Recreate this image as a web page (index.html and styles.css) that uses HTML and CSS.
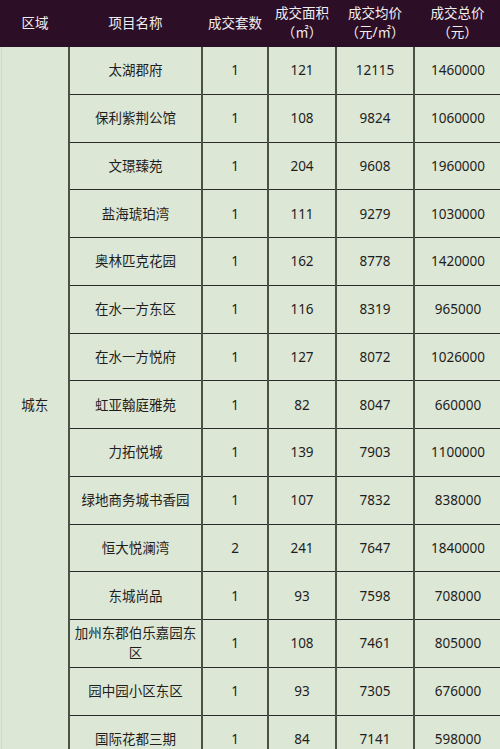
FILE: index.html
```html
<!DOCTYPE html>
<html lang="zh-CN">
<head>
<meta charset="utf-8">
<link rel="stylesheet" href="styles.css">
</head>
<body>
<table class="deals">
  <colgroup>
    <col class="c-area"><col class="c-name"><col class="c-cnt"><col class="c-size"><col class="c-avg"><col class="c-total">
  </colgroup>
  <thead>
    <tr>
      <th>区域</th>
      <th>项目名称</th>
      <th>成交套数</th>
      <th>成交面积<br>（㎡）</th>
      <th>成交均价<br>（元/㎡）</th>
      <th>成交总价<br>（元）</th>
    </tr>
  </thead>
  <tbody>
    <tr><td class="region" rowspan="15">城东</td><td>太湖郡府</td><td>1</td><td>121</td><td>12115</td><td>1460000</td></tr>
    <tr><td>保利紫荆公馆</td><td>1</td><td>108</td><td>9824</td><td>1060000</td></tr>
    <tr><td>文璟臻苑</td><td>1</td><td>204</td><td>9608</td><td>1960000</td></tr>
    <tr><td>盐海琥珀湾</td><td>1</td><td>111</td><td>9279</td><td>1030000</td></tr>
    <tr><td>奥林匹克花园</td><td>1</td><td>162</td><td>8778</td><td>1420000</td></tr>
    <tr><td>在水一方东区</td><td>1</td><td>116</td><td>8319</td><td>965000</td></tr>
    <tr><td>在水一方悦府</td><td>1</td><td>127</td><td>8072</td><td>1026000</td></tr>
    <tr><td>虹亚翰庭雅苑</td><td>1</td><td>82</td><td>8047</td><td>660000</td></tr>
    <tr><td>力拓悦城</td><td>1</td><td>139</td><td>7903</td><td>1100000</td></tr>
    <tr><td>绿地商务城书香园</td><td>1</td><td>107</td><td>7832</td><td>838000</td></tr>
    <tr><td>恒大悦澜湾</td><td>2</td><td>241</td><td>7647</td><td>1840000</td></tr>
    <tr><td>东城尚品</td><td>1</td><td>93</td><td>7598</td><td>708000</td></tr>
    <tr><td>加州东郡伯乐嘉园东区</td><td>1</td><td>108</td><td>7461</td><td>805000</td></tr>
    <tr><td>园中园小区东区</td><td>1</td><td>93</td><td>7305</td><td>676000</td></tr>
    <tr><td>国际花都三期</td><td>1</td><td>84</td><td>7141</td><td>598000</td></tr>
  </tbody>
</table>
</body>
</html>
```
FILE: styles.css
```css
html, body {
  margin: 0;
  padding: 0;
  background: #dde7d6;
}
body {
  font-family: "Noto Sans", "Noto Sans CJK SC", sans-serif;
  font-size: 13.5px;
  color: #1e1e1e;
}
.deals {
  width: 500px;
  border-collapse: collapse;
  table-layout: fixed;
  background: #dde7d6;
}
.c-area { width: 68px; }
.c-name { width: 133px; }
.c-cnt { width: 66px; }
.c-size { width: 68px; }
.c-avg { width: 78px; }
.c-total { width: 87px; }

.deals th {
  height: 46px;
  padding: 0 1px;
  background: #2c0e26;
  color: #f1eef0;
  font-weight: normal;
  line-height: 19px;
  text-align: center;
  vertical-align: middle;
  border-left: 2px solid #2c0e26;
  border-right: 2px solid #2c0e26;
  border-bottom: 1px solid #2c0e26;
}
.deals td {
  height: 46.75px;
  padding: 0 1px;
  line-height: 20px;
  text-align: center;
  vertical-align: middle;
  border: 1px solid #2b2b2b;
  border-left: 2px solid #4a5248;
  border-right: 2px solid #4a5248;
}
.deals td.region {
  border-left: 1px solid #cfd9c8;
}
.deals tr td:last-child {
  border-right: none;
}
```
